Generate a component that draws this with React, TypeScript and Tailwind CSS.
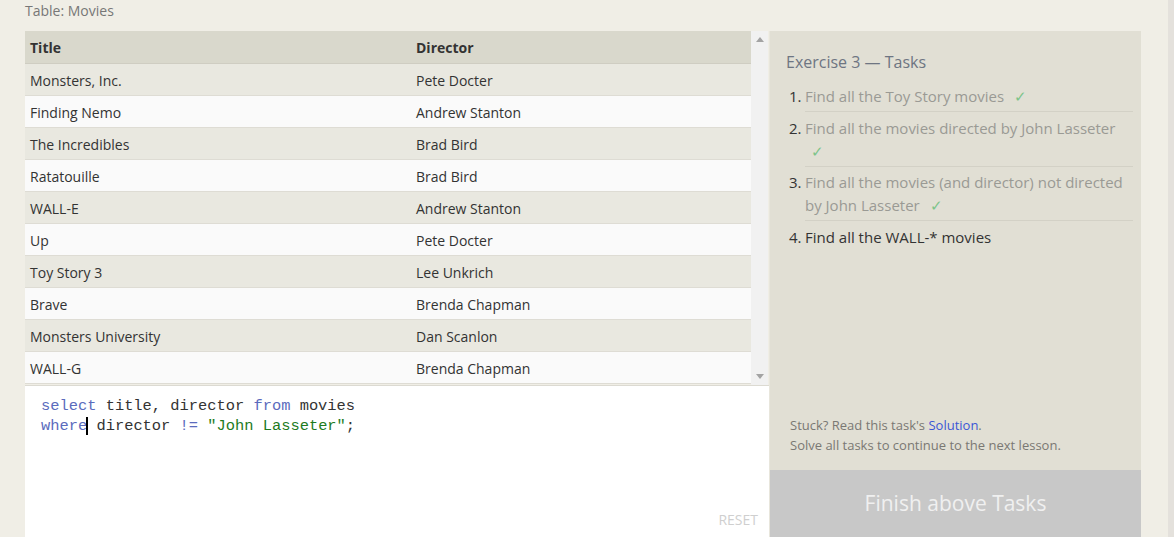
const movies = [
  ["Monsters, Inc.", "Pete Docter"],
  ["Finding Nemo", "Andrew Stanton"],
  ["The Incredibles", "Brad Bird"],
  ["Ratatouille", "Brad Bird"],
  ["WALL-E", "Andrew Stanton"],
  ["Up", "Pete Docter"],
  ["Toy Story 3", "Lee Unkrich"],
  ["Brave", "Brenda Chapman"],
  ["Monsters University", "Dan Scanlon"],
  ["WALL-G", "Brenda Chapman"],
];

const tasks = [
  { text: "Find all the Toy Story movies", done: true, wrapCheck: false },
  { text: "Find all the movies directed by John Lasseter", done: true, wrapCheck: true },
  { text: "Find all the movies (and director) not directed by John Lasseter", done: true, wrapCheck: false },
  { text: "Find all the WALL-* movies", done: false, wrapCheck: false },
];

const ui = { fontFamily: '"Open Sans", "Noto Sans", sans-serif' };
const mono = { fontFamily: '"Liberation Mono", "DejaVu Sans Mono", monospace' };

export default function App() {
  return (
    <div className="flex h-[537px] overflow-hidden bg-[#f0eee6] text-[#333]" style={ui}>
      <div className="w-[1168px] pl-[25px]">
        <div className="h-[31px] text-[14px] leading-[22px] text-[#777]">Table: Movies</div>
        <div className="flex">
          {/* left: table + editor */}
          <div className="w-[744px] flex flex-col">
            <div className="flex h-[355px] border-b border-[#dcdad2]">
              <div className="w-[726px]">
                <div className="flex h-[33px] items-center pt-[1px] bg-[#d9d8cc] border-b border-[#cfcdc2] text-[14px] font-bold text-[#333]">
                  <div className="w-[386px] pl-[5px]">Title</div>
                  <div className="pl-[5px]">Director</div>
                </div>
                {movies.map(([title, director], i) => (
                  <div
                    key={title}
                    className={`flex h-[32px] items-center pt-[1px] border-b border-[#dedcd4] text-[14px] ${
                      i % 2 === 0 ? "bg-[#e9e8e0]" : "bg-[#fafafa]"
                    }`}
                  >
                    <div className="w-[386px] pl-[5px]">{title}</div>
                    <div className="pl-[5px]">{director}</div>
                  </div>
                ))}
              </div>
              <div className="w-[17px] bg-[#f1f1f1] flex flex-col justify-between items-center py-[6px]">
                <svg width="8" height="5" viewBox="0 0 8 5">
                  <path d="M0 5 L4 0 L8 5 Z" fill="#a3a3a3" />
                </svg>
                <svg width="8" height="5" viewBox="0 0 8 5">
                  <path d="M0 0 L4 5 L8 0 Z" fill="#a3a3a3" />
                </svg>
              </div>
            </div>
            <div className="relative h-[160px] bg-white pl-[16px] pt-[10px] text-[15.4px] leading-[20px]" style={mono}>
              <div>
                <span className="text-[#5b6bbd]">select</span> title, director{" "}
                <span className="text-[#5b6bbd]">from</span> movies
              </div>
              <div>
                <span className="text-[#5b6bbd]">where</span>
                <span className="inline-block w-[2px] h-[18px] bg-black align-middle -ml-[1px] mr-[-1px]" />{" "}
                director <span className="text-[#5b6bbd]">!=</span>{" "}
                <span className="text-[#1e7b1e]">"John Lasseter"</span>;
              </div>
              <div className="absolute right-[11px] top-[124px] text-[14px] text-[#cfcfcf]" style={ui}>
                RESET
              </div>
            </div>
          </div>

          {/* right: tasks */}
          <div className="w-[372px] h-[506px] flex flex-col bg-[#e1dfd4] border-l border-[#e8e6dc]">
            <div className="px-[16px] pt-[20px] text-[16px] leading-[22px] text-[#6e7582]">
              Exercise 3 — Tasks
            </div>
            <ol className="pl-[19px] pr-[8px] pt-[12px] text-[15px] leading-[23px]">
              {tasks.map((t, i) => (
                <li key={i} className={`flex ${i > 0 ? "mt-[4.5px]" : ""}`}>
                  <span className="w-[16px] text-[#333]">{i + 1}.</span>
                  <span
                    className={`flex-1 ${
                      i < tasks.length - 1 ? "pb-[3px] border-b border-[#d3d1c6]" : ""
                    } ${t.done ? "text-[#9a9a94]" : "text-[#333]"}`}
                  >
                    {t.text}
                    {t.done && (
                      <span className={`text-[#7cc48a] ${t.wrapCheck ? "block pl-[6px]" : "inline-block ml-[10px]"}`}>✓</span>
                    )}
                  </span>
                </li>
              ))}
            </ol>
            <div className="flex-1" />
            <div className="px-[20px] pb-[15px] text-[13px] leading-[20px] text-[#7a7873]">
              <div>
                Stuck? Read this task's <span className="text-[#3b56d6]">Solution</span>.
              </div>
              <div>Solve all tasks to continue to the next lesson.</div>
            </div>
            <div className="h-[67px] flex items-center justify-center bg-[#c8c8c8] text-[21px] text-[#f0f0f0]">
              Finish above Tasks
            </div>
          </div>
        </div>
      </div>
      <div className="w-[6px] bg-[#e4e1dc]" />
    </div>
  );
}
